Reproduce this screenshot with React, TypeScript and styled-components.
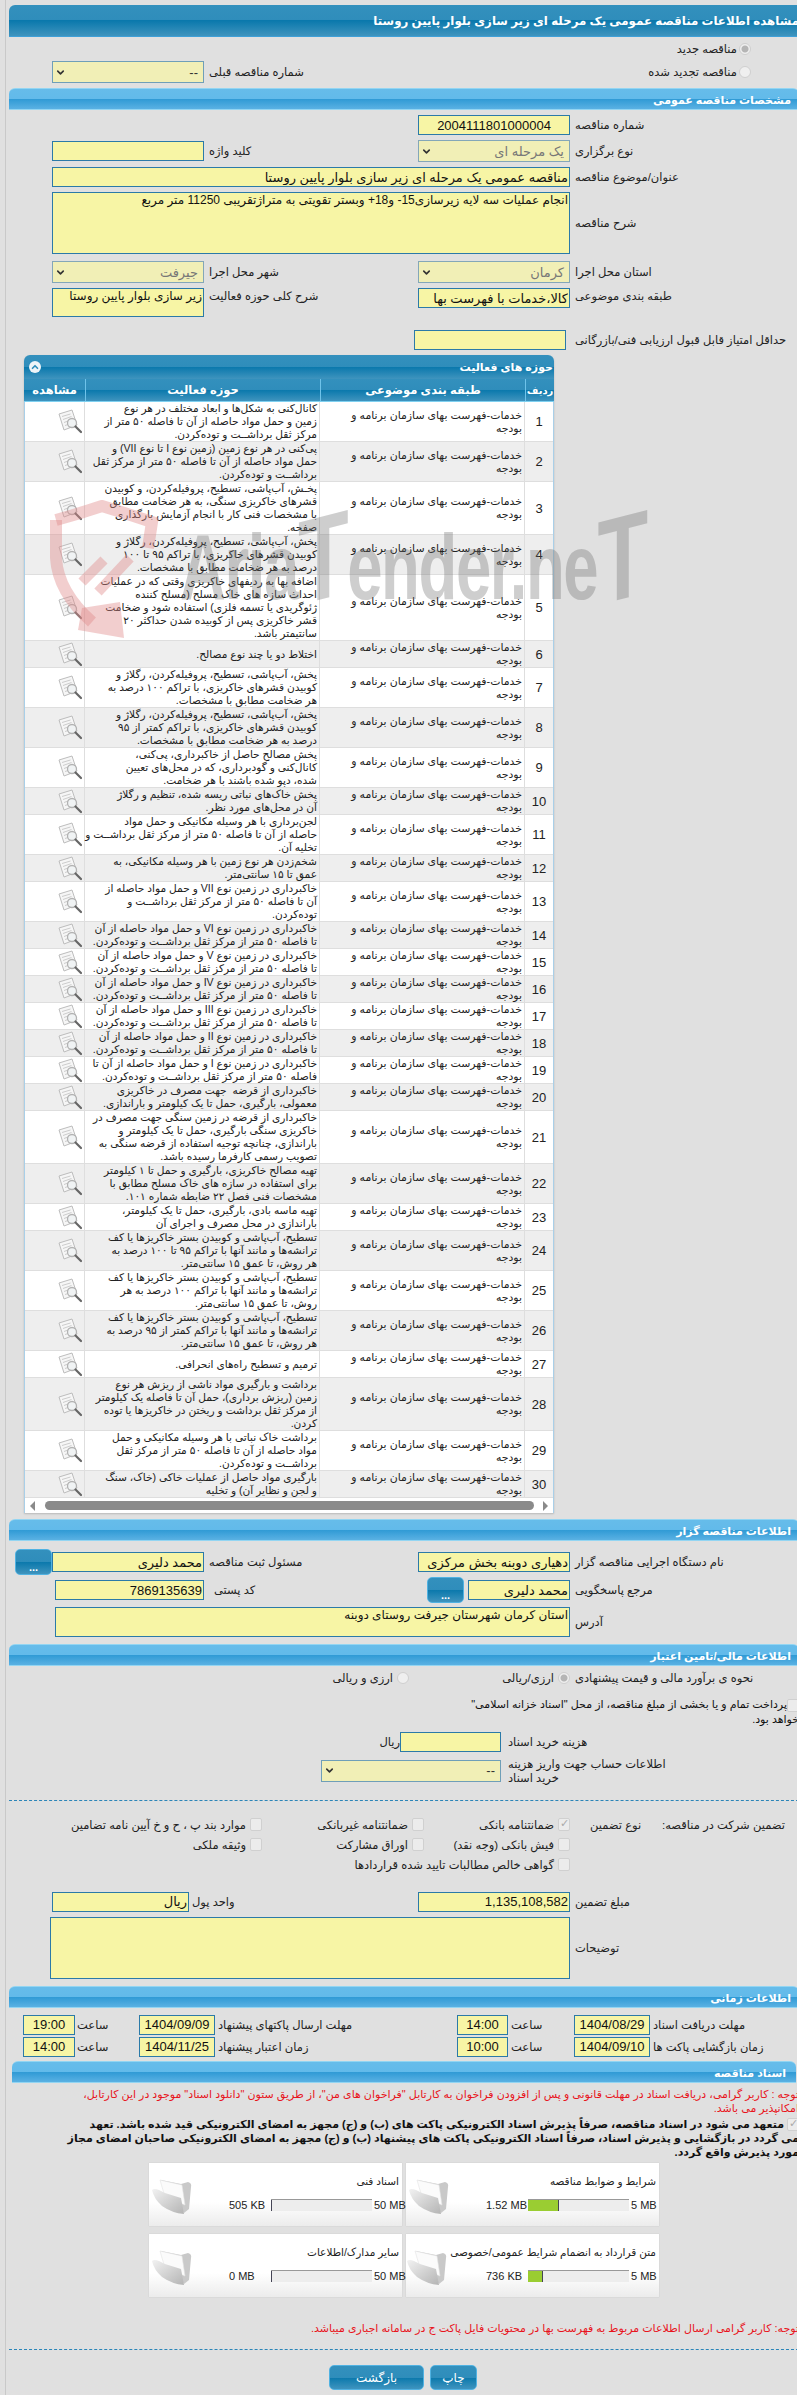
import React from 'react';
import styled, { createGlobalStyle } from 'styled-components';
import { ChevronDown, ChevronUp } from 'lucide-react';

const GlobalStyle = createGlobalStyle`
  html, body {
    margin: 0;
    padding: 0;
    background: #e0e0e0;
  }
  body {
    font-family: "Liberation Sans", "DejaVu Sans", sans-serif;
    font-size: 11px;
    color: #222;
  }
`;

const darkBar = 'linear-gradient(#3390bd 0, #2f8dbb 50%, #0a78ac 50%, #3f94be 100%)';
const lightBar = 'linear-gradient(#66bcea 0, #62baea 50%, #2f9ad5 50%, #5ab1e3 100%)';

const Page = styled.div`
  position: relative;
  width: 797px;
  height: 2395px;
  overflow: hidden;
  background: #e0e0e0;
`;

const SideLine = styled.div`
  position: absolute;
  left: 5px;
  top: 0;
  bottom: 0;
  width: 1px;
  background: #c9c9c9;
`;

const Sheet = styled.div`
  direction: rtl;
  margin-left: 9px;
  width: 790px;
  padding-top: 5px;
`;

const Banner = styled.div`
  height: 32px;
  line-height: 32px;
  background: ${darkBar};
  border-bottom: 1px solid #3ea0d8;
  box-sizing: border-box;
  border-top-left-radius: 6px;
  color: #fff;
  font-weight: 700;
  font-size: 11.8px;
  white-space: nowrap;
`;

const SectionBar = styled.div<{ $mt: number; $inset?: boolean }>`
  margin-top: ${p => p.$mt}px;
  margin-left: ${p => (p.$inset ? 3 : 0)}px;
  margin-right: ${p => (p.$inset ? 3 : 0)}px;
  padding-right: ${p => (p.$inset ? 10 : 8)}px;
  height: 22px;
  line-height: 22px;
  box-sizing: border-box;
  background: ${lightBar};
  border-top: 1px solid #93d5f2;
  border-bottom: 1px solid #93d5f2;
  border-radius: 6px 6px 0 0;
  color: #fff;
  font-weight: 700;
  font-size: 11px;
`;

const Row = styled.div<{ $mt: number; $h: number; $cols?: string; $top?: boolean }>`
  display: grid;
  grid-template-columns: ${p => p.$cols || '229px 152px 214px 152px 43px'};
  margin-top: ${p => p.$mt}px;
  height: ${p => p.$h}px;
  align-items: ${p => (p.$top ? 'start' : 'center')};
  font-size: 11.5px;
`;

const Label = styled.div<{ $pad?: number }>`
  text-align: left;
  padding-left: ${p => p.$pad ?? 5}px;
  white-space: pre-line;
  line-height: 14px;
`;

const TopLabel = styled(Label)`
  padding-top: 1px;
`;

const GuaranteeLabels = styled.div`
  display: flex;
  justify-content: space-between;
  padding: 0 14px 0 20px;
  white-space: nowrap;
`;

const Field = styled.input<{ $w?: number; $h?: number; $center?: boolean; $offset?: number }>`
  display: block;
  box-sizing: border-box;
  width: ${p => (p.$w ? `${p.$w}px` : '100%')};
  height: ${p => p.$h ?? 20}px;
  margin: 0 ${p => p.$offset ?? 0}px 0 0;
  padding: 0 1px;
  border: 1px solid #2b7aa8;
  border-radius: 0;
  background: #f7f5a5;
  color: #111;
  font: inherit;
  font-size: 13px;
  text-align: ${p => (p.$center ? 'center' : 'right')};
  direction: rtl;
  outline: none;
`;

const Area = styled.textarea<{ $w?: number; $h: number }>`
  display: block;
  box-sizing: border-box;
  width: ${p => (p.$w ? `${p.$w}px` : '100%')};
  height: ${p => p.$h}px;
  margin: 0;
  padding: 0 1px;
  border: 1px solid #2b7aa8;
  background: #f7f5a5;
  color: #111;
  font: inherit;
  font-size: 12px;
  line-height: 15px;
  resize: none;
  overflow: hidden;
  direction: rtl;
  outline: none;
`;

const Select = styled.div<{ $w?: number; $dim?: boolean }>`
  box-sizing: border-box;
  width: ${p => (p.$w ? `${p.$w}px` : '100%')};
  height: 22px;
  display: flex;
  align-items: center;
  justify-content: space-between;
  padding: 0 5px 0 2px;
  border: 1px solid ${p => (p.$dim ? '#84a7b8' : '#6f9fb8')};
  background: #f1efb6;
  color: ${p => (p.$dim ? '#777' : '#333')};
  font-size: 13px;
`;

const Span3 = styled.div`
  grid-column: span 3;
`;

const Span4 = styled.div`
  grid-column: span 4;
  display: flex;
  align-items: center;
`;

const Radio = styled.input.attrs({ type: 'radio', readOnly: true })`
  appearance: none;
  flex: none;
  box-sizing: border-box;
  width: 12px;
  height: 12px;
  margin: 0;
  border-radius: 50%;
  border: 1px solid #cfcfcf;
  background: ${p => (p.checked ? 'radial-gradient(#b5b5b5 0 3px, #efefef 4px)' : '#efefef')};
`;

const Check = styled.input.attrs({ type: 'checkbox', readOnly: true })`
  appearance: none;
  flex: none;
  box-sizing: border-box;
  width: 12px;
  height: 13px;
  margin: 0;
  position: relative;
  border-radius: 2px;
  border: 1px solid #d0d0d0;
  background: #ececec;
  &:checked::after {
    content: '✓';
    position: absolute;
    inset: -2px 0 0;
    text-align: center;
    color: #aaa;
    font-size: 11px;
  }
`;

const Option = styled.div<{ $w?: number }>`
  display: flex;
  align-items: center;
  gap: 4px;
  width: ${p => (p.$w ? `${p.$w}px` : 'auto')};
  white-space: nowrap;
`;

const RadioRight = styled.div`
  display: flex;
  align-items: center;
  gap: 2px;
  padding-right: 48px;
`;

const SmallButton = styled.button<{ $side?: boolean }>`
  width: 37px;
  height: 26px;
  padding: 10px 0 0;
  margin: ${p => (p.$side ? '0 0 0 6px' : '0')};
  justify-self: end;
  border: 1px solid #50b2e2;
  border-radius: 5px;
  background: ${darkBar};
  color: #fff;
  font: 700 11px "Liberation Sans", sans-serif;
  flex: none;
`;

const Inline = styled.div`
  display: flex;
  align-items: center;
  gap: 4px;
`;

const Panel = styled.div`
  position: relative;
  margin: 5px 245px 0 0;
  width: 530px;
  border-radius: 6px 6px 0 0;
  box-shadow: 0 1px 2px rgba(0, 0, 0, 0.18);
`;

const PanelTitle = styled.div`
  height: 24px;
  line-height: 24px;
  display: flex;
  justify-content: space-between;
  align-items: center;
  padding: 0 1px 0 5px;
  background: ${darkBar};
  border-radius: 6px 6px 0 0;
  color: #fff;
  font-weight: 700;
  font-size: 11px;
`;

const Collapse = styled.span`
  width: 12px;
  height: 12px;
  border-radius: 50%;
  background: #eef4f8;
  color: #2f8dbb;
  display: flex;
  align-items: center;
  justify-content: center;
`;

const Grid = styled.div`
  border-left: 1px solid #a9cfe8;
  border-right: 1px solid #a9cfe8;
  background: #fff;
`;

const HeadRow = styled.div`
  display: grid;
  grid-template-columns: 29px 205px 235px 1fr;
  height: 23px;
  background: ${darkBar};
  border-bottom: 1px solid #7fd0f0;
  box-sizing: border-box;
  margin: 0 -1px;
`;

const HeadCell = styled.div`
  display: flex;
  align-items: center;
  justify-content: center;
  color: #fff;
  font-weight: 700;
  font-size: 11.5px;
  border-left: 1px solid #6fc3ea;
  white-space: nowrap;
  &:first-child {
    font-size: 10px;
  }
  &:last-child {
    border-left: 0;
  }
`;

const BodyRow = styled.div<{ $odd: boolean }>`
  display: grid;
  grid-template-columns: 29px 205px 235px 1fr;
  background: ${p => (p.$odd ? '#eeeeee' : '#ffffff')};
  border-bottom: 1px solid #dedede;
  color: #222;
`;

const NumCell = styled.div`
  display: flex;
  align-items: center;
  justify-content: center;
  border-left: 1px solid #dedede;
  font-size: 13px;
`;

const TextCell = styled.div`
  display: flex;
  align-items: center;
  padding: 0 2px;
  border-left: 1px solid #dedede;
  white-space: pre;
  line-height: 13px;
  font-size: 10.6px;
`;

const CategoryCell = styled(TextCell)`
  font-size: 10.9px;
`;

const ViewCell = styled.div`
  display: flex;
  align-items: center;
  padding-right: 2px;
`;

const ScrollBar = styled.div`
  height: 15px;
  display: flex;
  align-items: center;
  justify-content: space-between;
  padding: 0 5px;
  background: #fff;
  color: #888;
`;

const Arrow = styled.span<{ $left?: boolean }>`
  width: 0;
  height: 0;
  border-top: 5px solid transparent;
  border-bottom: 5px solid transparent;
  ${p => (p.$left ? 'border-right: 5px solid #8a8a8a;' : 'border-left: 5px solid #8a8a8a;')}
`;

const Thumb = styled.div`
  width: 489px;
  height: 9px;
  border-radius: 5px;
  background: #8a8a8a;
`;

const Dashed = styled.div<{ $mt: number }>`
  margin-top: ${p => p.$mt}px;
  border-top: 1px dashed #2b85b8;
`;

const Para = styled.div<{ $mt: number; $red?: boolean; $bold?: boolean }>`
  margin-top: ${p => p.$mt}px;
  line-height: 14px;
  white-space: pre-line;
  color: ${p => (p.$red ? '#e8141c' : '#111')};
  font-weight: ${p => (p.$bold ? 700 : 400)};
`;

const CheckInline = styled(Check)`
  display: inline-block;
  vertical-align: middle;
`;

const Cards = styled.div`
  display: grid;
  grid-template-columns: 253px 253px;
  gap: 8px 4px;
  margin: 4px 140px 0 0;
`;

const Card = styled.div`
  display: flex;
  height: 63px;
  background: linear-gradient(#ffffff 0, #ffffff 62%, #ececec 100%);
  box-shadow: 0 0 1px rgba(0, 0, 0, 0.15);
`;

const CardBody = styled.div`
  flex: 1;
  padding: 11px 3px 0 0;
`;

const CardTitle = styled.div`
  height: 14px;
  line-height: 14px;
  font-size: 10.5px;
  white-space: nowrap;
`;

const SizeRow = styled.div`
  display: flex;
  align-items: center;
  gap: 2px;
  margin-top: 11px;
  font-size: 11px;
  direction: rtl;
`;

const SizeLabel = styled.span<{ $w: number; $end?: boolean }>`
  width: ${p => p.$w}px;
  direction: ltr;
  text-align: ${p => (p.$end ? 'right' : 'left')};
  white-space: nowrap;
`;

const Bar = styled.div`
  position: relative;
  direction: ltr;
  width: 101px;
  height: 12px;
  background: #ededed;
  border-top: 1px solid #999;
  box-sizing: border-box;
`;

const BarFill = styled.div`
  height: 100%;
  background: #9acd32;
  border-right: 1px solid #445;
  box-sizing: border-box;
`;

const FolderWrap = styled.div`
  flex: none;
  width: 46px;
  display: flex;
  align-items: center;
  justify-content: center;
  padding-top: 2px;
`;

const Buttons = styled.div`
  display: flex;
  gap: 6px;
  margin: 15px 322px 0 0;
`;

const ActionButton = styled.button<{ $w: number }>`
  width: ${p => p.$w}px;
  height: 25px;
  border: 1px solid #50b2e2;
  border-radius: 5px;
  background: ${darkBar};
  color: #fff;
  font: 400 12px "Liberation Sans", "DejaVu Sans", sans-serif;
`;

const WatermarkText = styled.div`
  position: absolute;
  left: 180px;
  top: 497px;
  width: 800px;
  direction: ltr;
  transform: scaleX(0.69);
  transform-origin: left top;
  font: 700 92px/120px "Liberation Sans", sans-serif;
  letter-spacing: -2px;
  color: rgba(105, 105, 105, 0.33);
  white-space: nowrap;
  pointer-events: none;
`;

const BigLetter = styled.span`
  display: inline-block;
  font-size: 120px;
  transform: skewY(-10deg);
`;

const WatermarkLogo = styled.svg`
  position: absolute;
  left: 48px;
  top: 500px;
  pointer-events: none;
`;

const DocIcon = () => (
  <svg width="24" height="25" viewBox="0 0 24 25">
    <path d="M1 5 L14 1 L19 16 L6 21 Z" fill="#f6f6f6" stroke="#bdbdbd" strokeWidth="1" />
    <path d="M4 7.5 L12.5 5 M5 10.5 L13.5 7.5 M6 13.5 L10 12 M7 16.5 L10 15.5" stroke="#cccccc" strokeWidth="1" />
    <circle cx="14" cy="14" r="4.5" fill="#f0f3f4" stroke="#b2b2b2" strokeWidth="1.3" />
    <path d="M17.5 17.5 L23 23" stroke="#666" strokeWidth="2.2" strokeLinecap="round" />
  </svg>
);

const FolderIcon = () => (
  <svg width="42" height="38" viewBox="0 0 42 38">
    <defs>
      <linearGradient id="folderBody" x1="0" y1="0" x2="1" y2="1">
        <stop offset="0" stopColor="#f2f2f2" />
        <stop offset="1" stopColor="#b4b4b4" />
      </linearGradient>
    </defs>
    <path d="M10 3 L30 7 L37 5 Q41 6 40 10 L38 32 L33 36 Z" fill="#c9c9c9" />
    <path d="M9 3 L31 8 L34 28 L14 20 Z" fill="#fbfbfb" stroke="#e2e2e2" strokeWidth="0.6" />
    <path d="M1 13 Q3 11 8 13 L14 16 L30 21 L33 37 Q21 36 11 29 Q3 22 1 13 Z" fill="url(#folderBody)" />
  </svg>
);

const row14 = (kind: string) => `خاکبرداری در زمین نوع ${kind} و حمل مواد حاصله از آن\nتا فاصله ۵۰ متر از مرکز ثقل برداشــت و توده‌کردن.`;

const activities = [
  'کانال‌کنی به شکل‌ها و ابعاد مختلف در هر نوع\nزمین و حمل مواد حاصله از آن تا فاصله ۵۰ متر از\nمرکز ثقل برداشــت و توده‌کردن.',
  'پی‌کنی در هر نوع زمین (زمین نوع I تا نوع VII) و\nحمل مواد حاصله از آن تا فاصله ۵۰ متر از مرکز ثقل\nبرداشــت و توده‌کردن.',
  'پخـش، آب‌پاشی، تسطیح، پروفیله‌کردن، و کوبیدن\nقشرهای خاکریزی سنگی، به هر ضخامت مطابق\nبا مشخصات فنی کار با انجام آزمایش بارگذاری\nصفحه.',
  'پخش، آب‌پاشی، تسطیح، پروفیله‌کردن، رگلاژ و\nکوبیدن قشرهای خاکریزی، با تراکم ۹۵ تا ۱۰۰\nدرصد به هر ضخامت مطابق با مشخصات.',
  'اضافه بها به ردیفهای خاکریزی وقتی که در عملیات\nاحداث سازه های خاک مسلح (مسلح کننده\nژئوگریدی یا تسمه فلزی) استفاده شود و ضخامت\nقشر خاکریزی پس از کوبیده شدن حداکثر ۲۰\nسانتیمتر باشد.',
  'اختلاط دو یا چند نوع مصالح.',
  'پخش، آب‌پاشی، تسطیح، پروفیله‌کردن، رگلاژ و\nکوبیدن قشرهای خاکریزی، با تراکم ۱۰۰ درصد به\nهر ضخامت مطابق با مشخصات.',
  'پخش، آب‌پاشی، تسطیح، پروفیله‌کردن، رگلاژ و\nکوبیدن قشرهای خاکریزی، با تراکم کمتر از ۹۵\nدرصد به هر ضخامت مطابق با مشخصات.',
  'پخش مصالح حاصل از خاکبرداری، پی‌کنی،\nکانال‌کنی و گودبرداری، که در محل‌های تعیین\nشده، دپو شده باشند با هر ضخامت.',
  'پخش خاک‌های نباتی ریسه شده، تنظیم و رگلاژ\nآن در محل‌های مورد نظر.',
  'لجن‌برداری با هر وسیله مکانیکی و حمل مواد\nحاصله از آن تا فاصله ۵۰ متر از مرکز ثقل برداشــت و\nتخلیه آن.',
  'شخم‌زدن هر نوع زمین با هر وسیله مکانیکی، به\nعمق تا ۱۵ سانتی‌متر.',
  'خاکبرداری در زمین نوع VII و حمل مواد حاصله از\nآن تا فاصله ۵۰ متر از مرکز ثقل برداشــت و\nتوده‌کردن.',
  row14('VI'),
  row14('V'),
  row14('IV'),
  row14('III'),
  row14('II'),
  'خاکبرداری در زمین نوع I و حمل مواد حاصله از آن تا\nفاصله ۵۰ متر از مرکز ثقل برداشــت و توده‌کردن.',
  'خاکبرداری از قرضه  جهت مصرف در خاکریزی\nمعمولی، بارگیری، حمل تا یک کیلومتر و باراندازی.',
  'خاکبرداری از قرضه در زمین سنگی جهت مصرف در\nخاکریزی سنگی بارگیری، حمل تا یک کیلومتر و\nباراندازی، چنانچه توجیه استفاده از قرضه سنگی به\nتصویب رسمی کارفرما رسیده باشد.',
  'تهیه مصالح خاکریزی، بارگیری و حمل تا ۱ کیلومتر\nبرای استفاده در سازه های خاک مسلح مطابق با\nمشخصات فنی فصل ۲۲ ضابطه شماره ۱۰۱.',
  'تهیه ماسه بادی، بارگیری، حمل تا یک کیلومتر،\nباراندازی در محل مصرف و اجرای آن',
  'تسطیح، آب‌پاشی و کوبیدن بستر خاکریزها یا کف\nترانشه‌ها و مانند آنها با تراکم ۹۵ تا ۱۰۰ درصد به\nهر روش، تا عمق ۱۵ سانتی‌متر.',
  'تسطیح، آب‌پاشی و کوبیدن بستر خاکریزها یا کف\nترانشه‌ها و مانند آنها با تراکم ۱۰۰ درصد به هر\nروش، تا عمق ۱۵ سانتی‌متر.',
  'تسطیح، آب‌پاشی و کوبیدن بستر خاکریزها یا کف\nترانشه‌ها و مانند آنها با تراکم کمتر از ۹۵ درصد به\nهر روش، تا عمق ۱۵ سانتی‌متر.',
  'ترمیم و تسطیح راه‌های انحرافی.',
  'برداشت و بارگیری مواد ناشی از ریزش هر نوع\nزمین (ریزش برداری)، حمل آن تا فاصله یک کیلومتر\nاز مرکز ثقل برداشت و ریختن در خاکریزها یا توده\nکردن.',
  'برداشت خاک نباتی با هر وسیله مکانیکی و حمل\nمواد حاصله از آن تا فاصله ۵۰ متر از مرکز ثقل\nبرداشــت و توده‌کردن.',
  'بارگیری مواد حاصل از عملیات خاکی (خاک، سنگ\nو لجن و نظایر آن) و تخلیه',
];

const docs = [
  { title: 'شرایط و ضوابط مناقصه', used: '1.52 MB', max: '5 MB', pct: 31 },
  { title: 'اسناد فنی', used: '505 KB', max: '50 MB', pct: 1 },
  { title: 'متن قرارداد به انضمام شرایط عمومی/خصوصی', used: '736 KB', max: '5 MB', pct: 15 },
  { title: 'سایر مدارک/اطلاعات', used: '0 MB', max: '50 MB', pct: 0 },
];

const timeCols = '149px 76px 66px 51px 242px 76px 64px 52px';

const Input = ({ value, ...rest }: { value?: string; $w?: number; $center?: boolean; $offset?: number; $h?: number }) => (
  <Field readOnly defaultValue={value} {...rest} />
);

const Drop = ({ value, dim, w }: { value: string; dim?: boolean; w?: number }) => (
  <Select $dim={dim} $w={w}>
    <span>{value}</span>
    <ChevronDown size={11} strokeWidth={3.5} color="#333" />
  </Select>
);

export default function App() {
  return (
    <Page>
      <GlobalStyle />
      <SideLine />
      <Sheet>
        <Banner>مشاهده اطلاعات مناقصه عمومی یک مرحله ای زیر سازی بلوار پایین روستا</Banner>

        <Row $mt={0} $h={24} $cols="1fr">
          <RadioRight>
            <Radio checked />
            مناقصه جدید
          </RadioRight>
        </Row>
        <Row $mt={0} $h={22}>
          <RadioRight>
            <Radio />
            مناقصه تجدید شده
          </RadioRight>
          <span />
          <Label>شماره مناقصه قبلی</Label>
          <Drop value="--" />
        </Row>

        <SectionBar $mt={5}>مشخصات مناقصه عمومی</SectionBar>

        <Row $mt={5} $h={20}>
          <Label>شماره مناقصه</Label>
          <Input value="2004111801000004" $center />
        </Row>
        <Row $mt={5} $h={22}>
          <Label>نوع برگزاری</Label>
          <Drop value="یک مرحله ای" dim />
          <Label>کلید واژه</Label>
          <Input />
        </Row>
        <Row $mt={5} $h={20}>
          <Label>عنوان/موضوع مناقصه</Label>
          <Span3>
            <Input value="مناقصه عمومی یک مرحله ای زیر سازی بلوار پایین روستا" />
          </Span3>
        </Row>
        <Row $mt={5} $h={62}>
          <Label>شرح مناقصه</Label>
          <Span3>
            <Area $h={62} readOnly defaultValue="انجام عملیات سه لایه زیرسازی15- و18+ وبستر تقویتی به متراژتقریبی 11250 متر مربع" />
          </Span3>
        </Row>
        <Row $mt={7} $h={22}>
          <Label>استان محل اجرا</Label>
          <Drop value="کرمان" dim />
          <Label>شهر محل اجرا</Label>
          <Drop value="جیرفت" dim />
        </Row>
        <Row $mt={5} $h={29} $top>
          <TopLabel>طبقه بندی موضوعی</TopLabel>
          <Input value="کالا،خدمات با فهرست بها" />
          <TopLabel>شرح کلی حوزه فعالیت</TopLabel>
          <Area $h={29} readOnly defaultValue="زیر سازی بلوار پایین روستا" />
        </Row>
        <Row $mt={13} $h={20}>
          <Label>حداقل امتیاز قابل قبول ارزیابی فنی/بازرگانی</Label>
          <Input $offset={4} />
        </Row>

        <Panel>
          <PanelTitle>
            <span>حوزه های فعالیت</span>
            <Collapse>
              <ChevronUp size={10} strokeWidth={4} />
            </Collapse>
          </PanelTitle>
          <Grid>
            <HeadRow>
              <HeadCell>ردیف</HeadCell>
              <HeadCell>طبقه بندی موضوعی</HeadCell>
              <HeadCell>حوزه فعالیت</HeadCell>
              <HeadCell>مشاهده</HeadCell>
            </HeadRow>
            {activities.map((text, i) => (
              <BodyRow key={i} $odd={i % 2 === 1}>
                <NumCell>{i + 1}</NumCell>
                <CategoryCell>{'خدمات-فهرست بهای سازمان برنامه و\nبودجه'}</CategoryCell>
                <TextCell>{text}</TextCell>
                <ViewCell>
                  <DocIcon />
                </ViewCell>
              </BodyRow>
            ))}
            <ScrollBar>
              <Arrow />
              <Thumb />
              <Arrow $left />
            </ScrollBar>
          </Grid>
        </Panel>

        <SectionBar $mt={6}>اطلاعات مناقصه گزار</SectionBar>
        <Row $mt={8} $h={20}>
          <Label>نام دستگاه اجرایی مناقصه گزار</Label>
          <Input value="دهیاری دوبنه بخش مرکزی" />
          <Label>مسئول ثبت مناقصه</Label>
          <Input value="محمد دلیری" />
          <SmallButton $side>...</SmallButton>
        </Row>
        <Row $mt={8} $h={25}>
          <Label>مرجع پاسخگویی</Label>
          <Inline>
            <Input value="محمد دلیری" $w={102} />
            <SmallButton>...</SmallButton>
          </Inline>
          <Label $pad={10}>کد پستی</Label>
          <Input value="7869135639" $w={149} />
        </Row>
        <Row $mt={5} $h={30}>
          <Label>آدرس</Label>
          <Span3>
            <Area $w={515} $h={30} readOnly defaultValue="استان کرمان شهرستان جیرفت روستای دوبنه" />
          </Span3>
        </Row>

        <SectionBar $mt={7}>اطلاعات مالی/تامین اعتبار</SectionBar>
        <Row $mt={0} $h={24}>
          <Label>نحوه ی برآورد مالی و قیمت پیشنهادی</Label>
          <Span4>
            <Option $w={161}>
              <Radio checked />
              ارزی/ریالی
            </Option>
            <Option>
              <Radio />
              ارزی و ریالی
            </Option>
          </Span4>
        </Row>
        <Para $mt={7}>
          <CheckInline />
          {'پرداخت تمام و یا بخشی از مبلغ مناقصه، از محل "اسناد خزانه اسلامی"\nخواهد بود.'}
        </Para>
        <Row $mt={6} $h={20} $cols="291px 7px 101px auto">
          <Label $pad={0}>هزینه خرید اسناد</Label>
          <span />
          <Input />
          <span>ریال</span>
        </Row>
        <Row $mt={5} $h={22} $cols="291px 7px 180px">
          <Label $pad={0}>{'اطلاعات حساب جهت واریز هزینه\nخرید اسناد'}</Label>
          <span />
          <Drop value="--" />
        </Row>
        <Dashed $mt={21} />

        <Row $mt={14} $h={20} $cols="229px 146px 162px auto">
          <GuaranteeLabels>
            <span>تضمین شرکت در مناقصه:</span>
            <span>نوع تضمین</span>
          </GuaranteeLabels>
          <Option>
            <Check defaultChecked disabled />
            ضمانتنامه بانکی
          </Option>
          <Option>
            <Check />
            ضمانتنامه غیربانکی
          </Option>
          <Option>
            <Check />
            موارد بند پ ، ح و خ آیین نامه تضامین
          </Option>
        </Row>
        <Row $mt={0} $h={20} $cols="229px 146px 162px auto">
          <span />
          <Option>
            <Check />
            فیش بانکی (وجه نقد)
          </Option>
          <Option>
            <Check />
            اوراق مشارکت
          </Option>
          <Option>
            <Check />
            وثیقه ملکی
          </Option>
        </Row>
        <Row $mt={0} $h={20} $cols="229px auto">
          <span />
          <Option>
            <Check />
            گواهی خالص مطالبات تایید شده قراردادها
          </Option>
        </Row>

        <Row $mt={17} $h={20} $cols="229px 152px 229px 137px">
          <Label>مبلغ تضمین</Label>
          <Input value="1,135,108,582" />
          <Label $pad={3}>واحد پول</Label>
          <Input value="ریال" />
        </Row>
        <Row $mt={5} $h={62} $cols="229px 520px">
          <Label>توضیحات</Label>
          <Area $h={62} readOnly />
        </Row>

        <SectionBar $mt={7}>اطلاعات زمانی</SectionBar>
        <Row $mt={7} $h={20} $cols={timeCols}>
          <Label $pad={3}>مهلت دریافت اسناد</Label>
          <Input value="1404/08/29" $center />
          <Label $pad={3}>ساعت</Label>
          <Input value="14:00" $center />
          <Label $pad={3}>مهلت ارسال پاکتهای پیشنهاد</Label>
          <Input value="1404/09/09" $center />
          <Label $pad={2}>ساعت</Label>
          <Input value="19:00" $center />
        </Row>
        <Row $mt={2} $h={20} $cols={timeCols}>
          <Label $pad={3}>زمان بازگشایی پاکت ها</Label>
          <Input value="1404/09/10" $center />
          <Label $pad={3}>ساعت</Label>
          <Input value="10:00" $center />
          <Label $pad={3}>زمان اعتبار پیشنهاد</Label>
          <Input value="1404/11/25" $center />
          <Label $pad={2}>ساعت</Label>
          <Input value="14:00" $center />
        </Row>

        <SectionBar $mt={4} $inset>اسناد مناقصه</SectionBar>
        <Para $mt={4} $red>
          {'توجه : کاربر گرامی، دریافت اسناد در مهلت قانونی و پس از افزودن فراخوان به کارتابل "فراخوان های من"، از طریق ستون "دانلود اسناد" موجود در این کارتابل،\nامکانپذیر می باشد.'}
        </Para>
        <Para $mt={2} $bold>
          <CheckInline defaultChecked disabled />
          {' متعهد می شود در اسناد مناقصه، صرفاً پذیرش اسناد الکترونیکی پاکت های (ب) و (ج) مجهز به امضای الکترونیکی قید شده باشد. تعهد\nمی گردد در بازگشایی و پذیرش اسناد، صرفاً اسناد الکترونیکی پاکت های پیشنهاد (ب) و (ج) مجهز به امضای الکترونیکی صاحبان امضای مجاز\nمورد پذیرش واقع گردد.'}
        </Para>

        <Cards>
          {docs.map(d => (
            <Card key={d.title}>
              <CardBody>
                <CardTitle>{d.title}</CardTitle>
                <SizeRow>
                  <SizeLabel $w={25} $end>{d.max}</SizeLabel>
                  <Bar>
                    <BarFill style={{ width: `${d.pct}%` }} />
                  </Bar>
                  <SizeLabel $w={40}>{d.used}</SizeLabel>
                </SizeRow>
              </CardBody>
              <FolderWrap>
                <FolderIcon />
              </FolderWrap>
            </Card>
          ))}
        </Cards>

        <Para $mt={24} $red>توجه: کاربر گرامی ارسال اطلاعات مربوط به فهرست بها در محتویات فایل پاکت ج در سامانه اجباری میباشد.</Para>
        <Dashed $mt={14} />
        <Buttons>
          <ActionButton $w={47}>چاپ</ActionButton>
          <ActionButton $w={95}>بازگشت</ActionButton>
        </Buttons>
      </Sheet>

      <WatermarkLogo width="112" height="140" viewBox="0 0 112 140">
        <g fill="none" stroke="#e08a8a" strokeOpacity="0.42" strokeWidth="12">
          <path d="M8 20 Q30 14 54 6 Q80 14 104 22 L100 48" />
          <path d="M8 20 L8 58 Q10 92 44 122" />
          <path d="M34 82 L56 60 M50 92 L82 58" strokeWidth="10" />
        </g>
        <path d="M34 108 L72 102 L76 138 L30 130 Z" fill="#e08a8a" fillOpacity="0.42" />
      </WatermarkLogo>
      <WatermarkText>
        Aria<BigLetter>T</BigLetter>ender.ne<BigLetter>T</BigLetter>
      </WatermarkText>
    </Page>
  );
}
